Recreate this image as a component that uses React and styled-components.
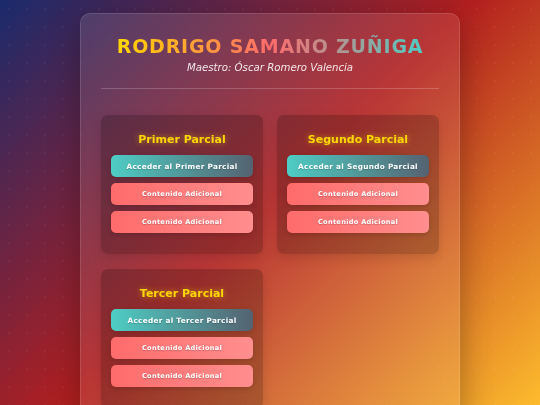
import React from "react";
import styled, { createGlobalStyle } from "styled-components";

const GlobalStyle = createGlobalStyle`
  html, body {
    margin: 0;
    padding: 0;
    min-height: 100%;
  }

  body {
    font-family: "DejaVu Sans", Verdana, sans-serif;
    color: white;
    background: linear-gradient(135deg, #1a2a6c 0%, #b21f1f 50%, #fdbb2d 100%);
    background-attachment: fixed;
    min-height: 100vh;
    overflow: hidden;
  }

  body::before {
    content: "";
    position: fixed;
    inset: 0;
    pointer-events: none;
    background-image: radial-gradient(rgba(255, 255, 255, 0.045) 1px, transparent 1.5px);
    background-size: 18px 18px;
  }
`;

const Container = styled.div`
  position: relative;
  width: 380px;
  margin: 13px auto 0;
  padding: 21px 20px 40px;
  box-sizing: border-box;
  background: rgba(255, 255, 255, 0.1);
  border: 1px solid rgba(255, 255, 255, 0.12);
  border-radius: 10px;
  box-shadow: 0 8px 32px rgba(0, 0, 0, 0.3);
  backdrop-filter: blur(10px);
`;

const Header = styled.header`
  text-align: center;
  padding-bottom: 14px;
  border-bottom: 1px solid rgba(255, 255, 255, 0.2);
  margin-bottom: 26px;
`;

const Title = styled.h1`
  display: inline-block;
  margin: 0 0 4px;
  font-size: 19px;
  line-height: 22px;
  font-weight: bold;
  letter-spacing: 0.8px;
  background: linear-gradient(90deg, #ffd700, #ff6b6b, #4ecdc4);
  -webkit-background-clip: text;
  background-clip: text;
  color: transparent;
`;

const Teacher = styled.p`
  margin: 0;
  font-size: 10.2px;
  line-height: 13px;
  font-style: italic;
  color: rgba(255, 255, 255, 0.88);
`;

const Grid = styled.div`
  display: grid;
  grid-template-columns: 1fr 1fr;
  column-gap: 14px;
  row-gap: 15px;
`;

const Card = styled.section`
  background: rgba(0, 0, 0, 0.2);
  border-radius: 7px;
  padding: 18px 10px 21px;
  box-shadow: 0 4px 12px rgba(0, 0, 0, 0.12);
  display: flex;
  flex-direction: column;
  gap: 6px;
`;

const CardTitle = styled.h2`
  margin: 0 0 3px;
  text-align: center;
  font-size: 11px;
  line-height: 13px;
  font-weight: bold;
  color: #ffd700;
  text-shadow: 0 0 6px rgba(255, 215, 0, 0.55);
`;

const Button = styled.a`
  display: flex;
  align-items: center;
  justify-content: center;
  height: 22px;
  border-radius: 5px;
  font-size: ${(props) => (props.primary ? "7.3px" : "6.6px")};
  font-weight: bold;
  letter-spacing: 0.3px;
  color: white;
  text-decoration: none;
  text-shadow: 0 1px 1px rgba(0, 0, 0, 0.2);
  background: ${(props) =>
    props.primary
      ? "linear-gradient(90deg, #4ecdc4, #556270)"
      : "linear-gradient(90deg, #ff6b6b, #ff8e8e)"};
  box-shadow: 0 2px 5px rgba(0, 0, 0, 0.15);
`;

const parciales = ["Primer", "Segundo", "Tercer"];

export default function App() {
  return (
    <>
      <GlobalStyle />
      <Container>
        <Header>
          <Title>RODRIGO SAMANO ZUÑIGA</Title>
          <Teacher>Maestro: Óscar Romero Valencia</Teacher>
        </Header>
        <Grid>
          {parciales.map((name) => (
            <Card key={name}>
              <CardTitle>{name} Parcial</CardTitle>
              <Button primary href="#">
                Acceder al {name} Parcial
              </Button>
              <Button href="#">Contenido Adicional</Button>
              <Button href="#">Contenido Adicional</Button>
            </Card>
          ))}
        </Grid>
      </Container>
    </>
  );
}
